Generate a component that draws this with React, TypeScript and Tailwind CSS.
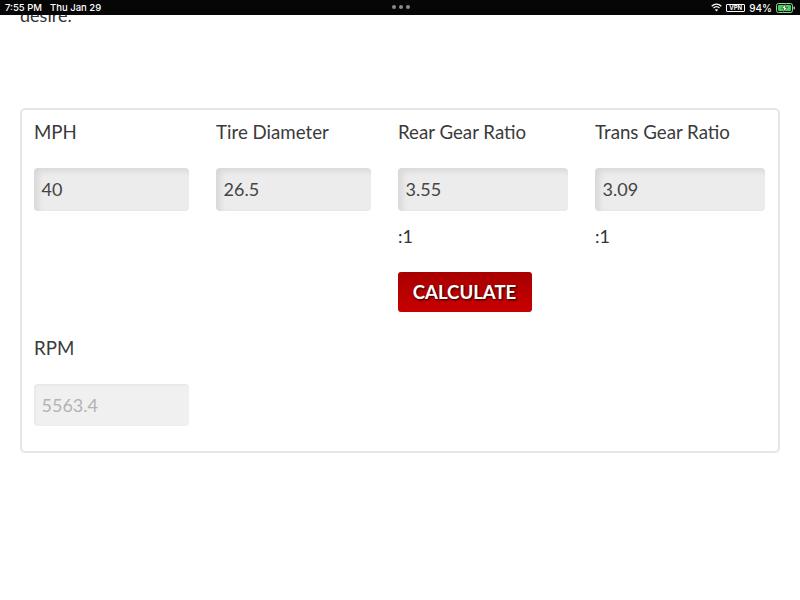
import React from "react";

const font = { fontFamily: "Lato, 'Noto Sans', sans-serif" };

function Field({ label, value, suffix, children }: { label: string; value: string; suffix?: boolean; children?: React.ReactNode }) {
  return (
    <div className="flex flex-col">
      <div className="h-[22px] text-[18.7px] leading-[22px] text-[#3a3a3a]">{label}</div>
      <div className="mt-[25px] flex h-[43px] items-center rounded-[4px] bg-[#ececec] px-[7.5px] text-[18px] text-[#444] shadow-[inset_4px_3px_6px_rgba(0,0,0,0.09)]">
        {value}
      </div>
      {suffix && <div className="mt-[14px] h-[22px] text-[18px] leading-[22px] text-[#333]">:1</div>}
      {children}
    </div>
  );
}

export default function App() {
  return (
    <div className="h-[600px] w-[800px] overflow-hidden bg-white" style={font}>
      <div className="relative z-10 flex h-[15px] items-center justify-between bg-[#060606] pl-[5px] pr-[4px] text-[9.5px] font-medium leading-none text-white" style={{ fontFamily: "Inter, sans-serif" }}>
        <div className="flex gap-[8px]">
          <span>7:55 PM</span>
          <span>Thu Jan 29</span>
        </div>
        <div className="absolute left-[392px] top-[5px] flex gap-[3px]">
          <span className="h-[4px] w-[4px] rounded-full bg-[#8a8a8a]" />
          <span className="h-[4px] w-[4px] rounded-full bg-[#8a8a8a]" />
          <span className="h-[4px] w-[4px] rounded-full bg-[#8a8a8a]" />
        </div>
        <div className="flex items-center gap-[4px]">
          <svg width="11" height="9" viewBox="0 0 11 9" fill="none" stroke="white" strokeWidth="1.3">
            <path d="M0.7 3.2 C3.5 0.6 7.5 0.6 10.3 3.2" />
            <path d="M2.5 5 C4.2 3.5 6.8 3.5 8.5 5" />
            <path d="M5.5 8.4 L4 6.7 C4.9 6.1 6.1 6.1 7 6.7 Z" fill="white" stroke="none" />
          </svg>
          <span className="flex h-[8px] items-center rounded-[1px] border border-white px-[2px] text-[6px] font-bold leading-none">VPN</span>
          <span className="mt-[1px] text-[10px]">94%</span>
          <svg width="20" height="10" viewBox="0 0 20 10">
            <rect x="0.5" y="0.5" width="16" height="9" rx="2" fill="none" stroke="#8fdc9b" />
            <rect x="2" y="2" width="13" height="6" rx="1" fill="#3fd45a" />
            <rect x="17.5" y="3.5" width="1.5" height="3" rx="0.7" fill="#aaa" />
            <path d="M10 0.6 L5.5 5.4 H7.9 L6.9 9.4 L11.5 4.4 H9.1 Z" fill="white" stroke="#060606" strokeWidth="0.5" />
          </svg>
        </div>
      </div>
      <div className="px-[20px]">
        <div className="-mt-[7px] h-[16px] text-[18px] leading-[15px] text-[#333]">desire.</div>
        <div className="mt-[84px] h-[345px] rounded-[5px] border-2 border-[#e6e6e6] pl-[12px] pr-[13px] pt-[11px]">
          <div className="grid grid-cols-[155px_155px_170px_170px] gap-x-[27px]">
            <Field label="MPH" value="40" />
            <Field label="Tire Diameter" value="26.5" />
            <Field label="Rear Gear Ratio" value="3.55" suffix>
              <button className="mt-[25px] h-[40px] w-[134px] rounded-[3px] bg-gradient-to-b from-[#a80000] to-[#c80000] pt-[1px] pr-[1px] text-[18.6px] font-bold text-white [text-shadow:1px_1px_2px_rgba(0,0,0,0.9)]">
                CALCULATE
              </button>
            </Field>
            <Field label="Trans Gear Ratio" value="3.09" suffix />
          </div>
          <div className="mt-[25px] w-[155px]">
            <div className="h-[22px] text-[18.7px] leading-[22px] text-[#3a3a3a]">RPM</div>
            <div className="mt-[25px] flex h-[42px] items-center rounded-[4px] bg-[#f0f0f0] px-[7.5px] text-[18px] text-[#b3b3b3] shadow-[inset_1px_1px_3px_rgba(0,0,0,0.05)]">
              5563.4
            </div>
          </div>
        </div>
      </div>
    </div>
  );
}
